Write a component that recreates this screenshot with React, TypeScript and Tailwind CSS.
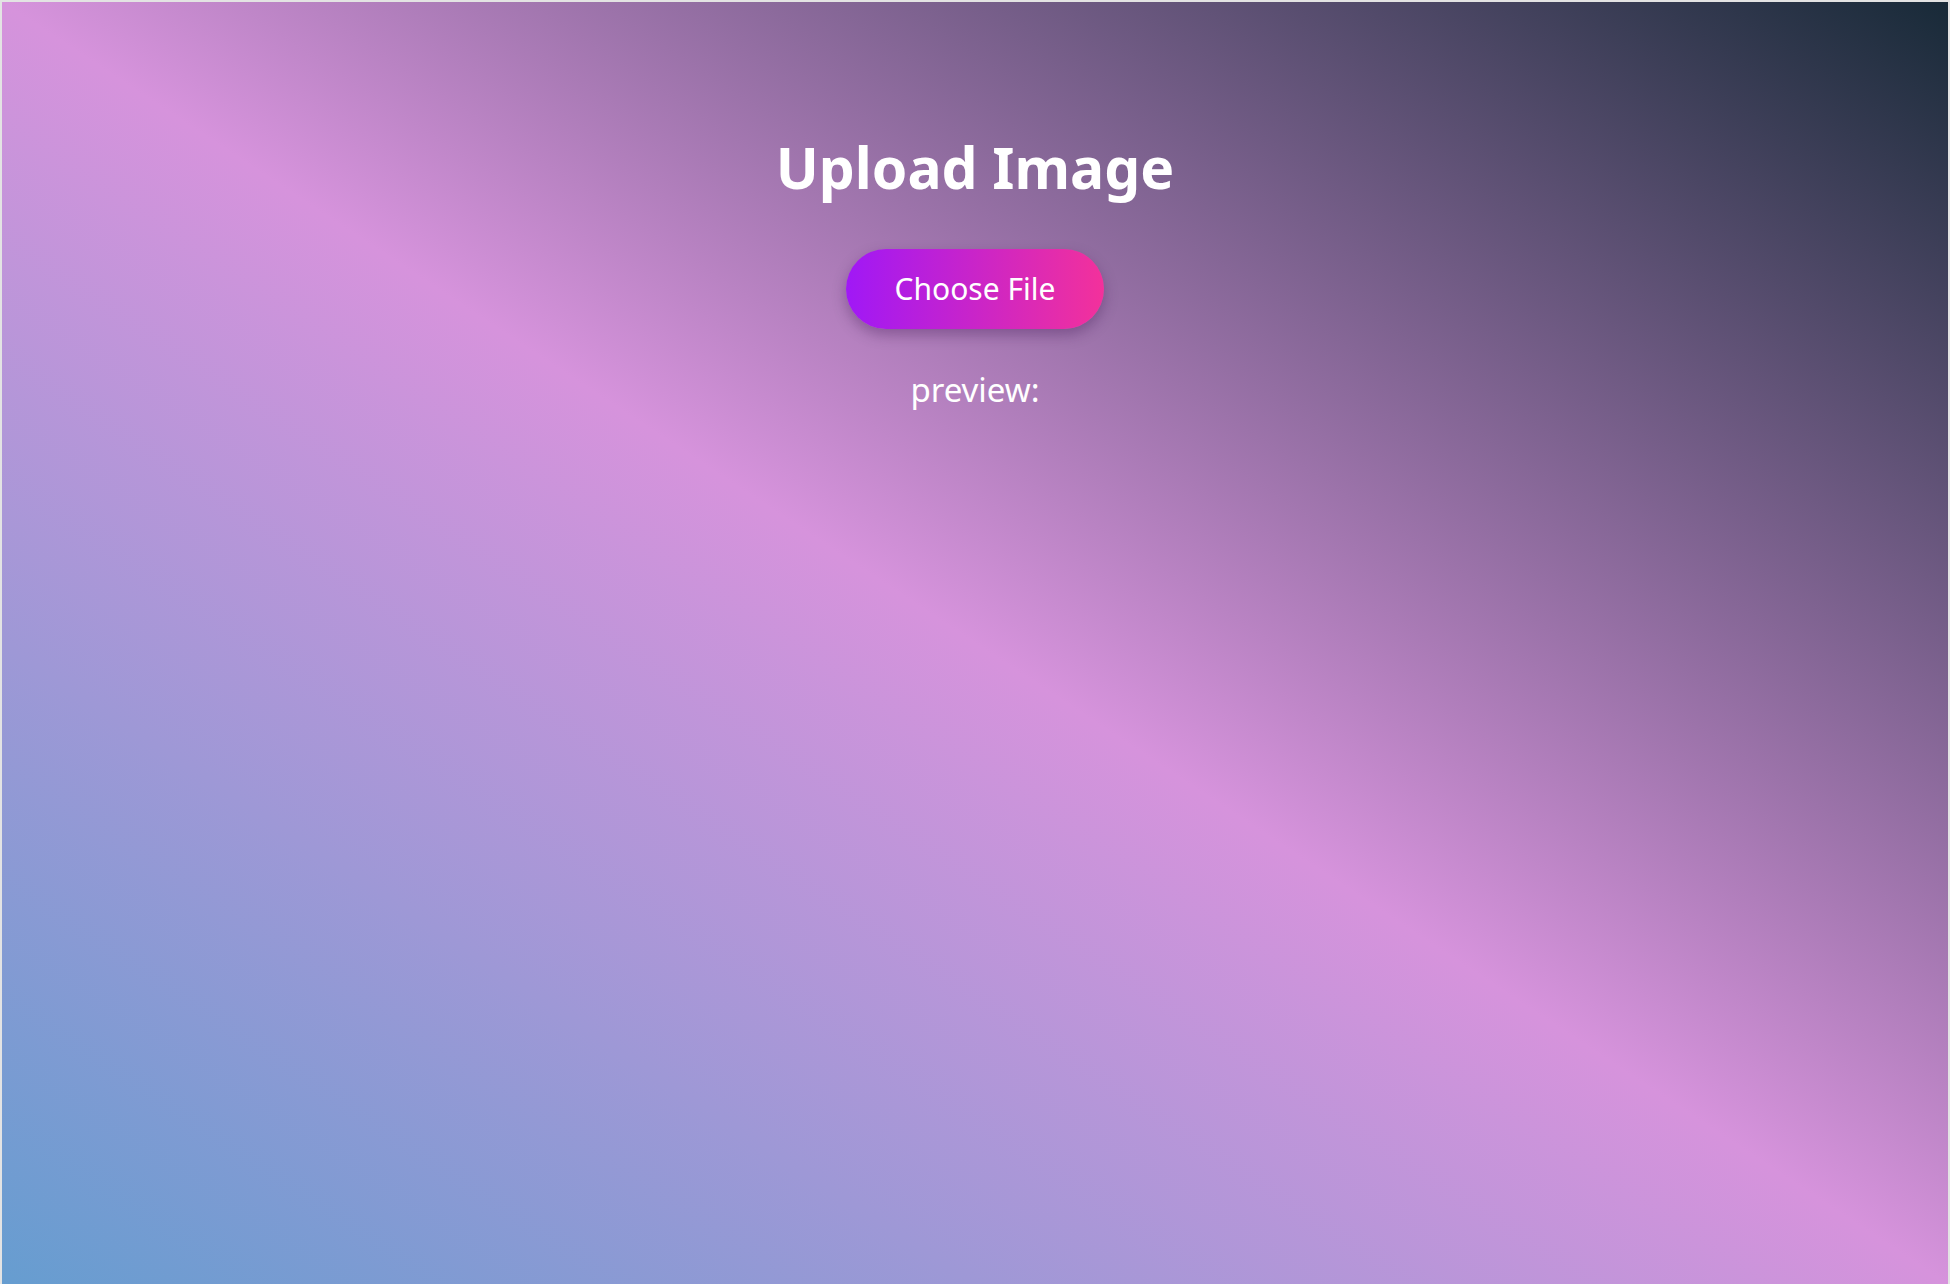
import React from "react";

export default function App() {
  return (
    <div
      className="w-full h-[1284px] overflow-hidden border-t-2 border-l-2 border-r-2 border-[#e3e3e3] bg-[linear-gradient(to_top_right,#669dd0,#d693dc_50%,#182a38)] flex flex-col items-center pt-[131px] text-white"
      style={{ fontFamily: '"Noto Sans", "Open Sans", sans-serif' }}
    >
      <h1 className="text-[57px] leading-[68px] font-bold">Upload Image</h1>
      <label className="mt-[48px] w-[258px] h-[80px] rounded-full flex items-center justify-center bg-[linear-gradient(to_right,#a018f6,#f3319b)] shadow-[0_6px_14px_rgba(60,20,80,0.35)] cursor-pointer">
        <span className="text-[30px] leading-[40px] font-normal">Choose File</span>
        <input type="file" className="hidden" />
      </label>
      <p className="mt-[40px] text-[33px] leading-[42px]">preview:</p>
    </div>
  );
}
